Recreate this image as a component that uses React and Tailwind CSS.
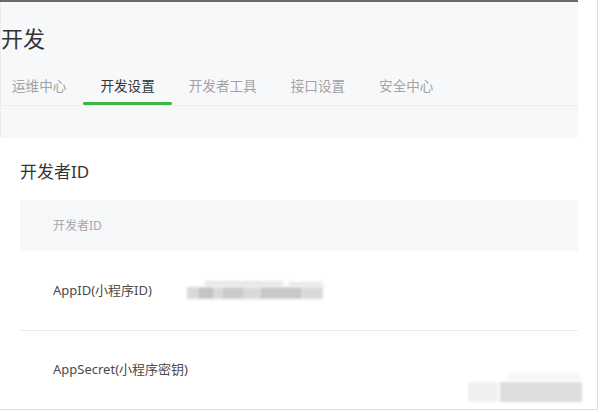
import React from 'react';

const tabs = ['运维中心', '开发设置', '开发者工具', '接口设置', '安全中心'];

const Tab = ({ label, active }) => (
  <div className="flex flex-col">
    <span className={`px-[17px] text-[13.6px] leading-[20px] ${active ? 'text-[#353535]' : 'text-[#a3a3a3]'}`}>{label}</span>
    <div className={`mt-[6px] h-[3px] w-full rounded-full ${active ? 'bg-[#3fb24a]' : 'bg-transparent'}`} />
  </div>
);

const BlurredValue = () => (
  <div className="relative h-[20px] w-[140px]">
    <div className="absolute left-[18px] top-[0px] h-[5px] w-[78px] bg-[#e6e6e6] blur-[1.5px]" />
    <div className="absolute left-[102px] top-[1px] h-[4px] w-[34px] bg-[#e8e8e8] blur-[1.5px]" />
    <div className="absolute left-[0px] top-[6px] h-[12px] w-[136px] bg-[#d9d9d9] blur-[1.5px]" />
    <div className="absolute left-[12px] top-[7px] h-[10px] w-[14px] bg-[#c4c4c4] blur-[1px]" />
    <div className="absolute left-[36px] top-[7px] h-[10px] w-[20px] bg-[#cbcbcb] blur-[1px]" />
    <div className="absolute left-[74px] top-[7px] h-[10px] w-[40px] bg-[#c8c8c8] blur-[1px]" />
  </div>
);

export default function App() {
  return (
    <div
      className="relative h-[412px] w-[600px] overflow-hidden bg-white"
      style={{ fontFamily: '"Noto Sans", "Noto Sans CJK SC", sans-serif' }}
    >
      <div className="flex h-[410px] w-[598px] border-b border-r border-[#dcdcdc]">
        <div className="flex w-[578px] flex-col border-t-2 border-[#6a6a6a]">
          {/* header */}
          <div className="h-[136px] border-l border-[#ececec] bg-[#f7f8fa]">
            <h1 className="pt-[21px] text-[22px] leading-[30px] text-[#333]">开发</h1>
            <div className="mt-[23px] flex border-b border-[#eceef0]">
              <div className="ml-[-6px] flex">
                {tabs.map((t) => (
                  <Tab key={t} label={t} active={t === '开发设置'} />
                ))}
              </div>
            </div>
          </div>

          {/* card */}
          <div className="flex-1 pl-[20px] pt-[22px]">
            <h2 className="text-[17px] leading-[24px] text-[#353535]">开发者ID</h2>
            <div className="mt-[16px] flex h-[51px] items-center bg-[#f6f7f9] pl-[33px]">
              <span className="text-[12px] text-[#a8a8a8]">开发者ID</span>
            </div>
            <div className="flex h-[80px] items-center border-b border-[#ececec] pl-[33px]">
              <span className="w-[134px] text-[13px] text-[#4a4a4a]">AppID(小程序ID)</span>
              <BlurredValue />
            </div>
            <div className="flex h-[78px] items-center pl-[33px]">
              <span className="text-[13px] text-[#4a4a4a]">AppSecret(小程序密钥)</span>
            </div>
          </div>
        </div>
      </div>

      {/* blurred watermark at bottom right */}
      <div className="absolute left-[468px] top-[378px] h-[24px] w-[114px]">
        <div className="absolute left-0 top-[4px] h-[20px] w-[30px] bg-[#f0f0f0] blur-[1px]" />
        <div className="absolute left-[32px] top-[4px] h-[20px] w-[82px] bg-[#dedede] blur-[1px]" />
        <div className="absolute left-[40px] top-[-4px] h-[6px] w-[72px] bg-[#f2f2f2] blur-[2px]" />
      </div>
    </div>
  );
}
